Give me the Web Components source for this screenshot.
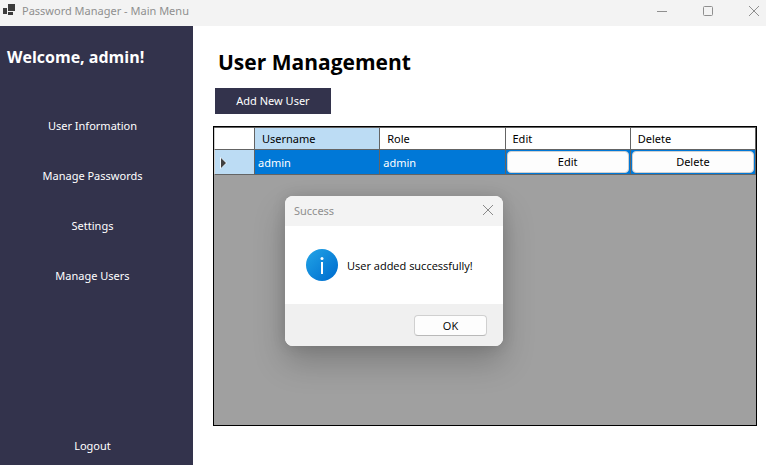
<!DOCTYPE html>
<html lang="en">
<head>
<meta charset="utf-8">
<title>Password Manager - Main Menu</title>
<style>
html, body { height: 100%; }
body { margin: 0; background: #fff; color: #000; font: 12px/16px "Open Sans", "Noto Sans", sans-serif; --compact: 11px/16px "Noto Sans", "Open Sans", sans-serif; }
</style>
</head>
<body>
<app-window>
  <title-bar slot="title">Password Manager - Main Menu</title-bar>
  <side-menu slot="side">
    <span slot="greeting">Welcome, admin!</span>
    <menu-item>User Information</menu-item>
    <menu-item>Manage Passwords</menu-item>
    <menu-item>Settings</menu-item>
    <menu-item>Manage Users</menu-item>
    <menu-item slot="end">Logout</menu-item>
  </side-menu>
  <user-page></user-page>
  <message-box slot="dialog" heading="Success">User added successfully!</message-box>
</app-window>
<script>
function define(name, html, setup) {
  const template = document.createElement('template');
  template.innerHTML = html;
  customElements.define(name, class extends HTMLElement {
    constructor() {
      super();
      this.attachShadow({ mode: 'open' }).append(template.content.cloneNode(true));
    }
    connectedCallback() { if (setup) setup(this, this.shadowRoot); }
  });
}

define('app-window', `
<style>
:host { display: flex; flex-direction: column; min-height: 100vh; position: relative; }
.body { flex: 1; display: flex; }
main { flex: 1; display: flex; min-width: 0; }
::slotted([slot=dialog]) { position: absolute; left: 285px; top: 196px; }
</style>
<slot name="title"></slot>
<div class="body"><slot name="side"></slot><main><slot></slot></main></div>
<slot name="dialog"></slot>`);

define('title-bar', `
<style>
:host { display: flex; align-items: center; height: 26px; box-sizing: border-box; padding: 0 0 5px 3px; background: #f3f3f3; color: #8f8f8f; }
.logo { margin-right: 7px; flex: none; }
.text { flex: 1; font: var(--compact); white-space: nowrap; }
.controls { display: flex; gap: 22px; }
button { width: 24px; height: 20px; padding: 0; border: 0; background: none; display: grid; place-items: center; color: #8f8f8f; }
svg { display: block; }
</style>
<svg class="logo" width="12" height="13" viewBox="0 0 12 13" fill="#3c3c3c"><path d="M5 0h7v7H5zM0 4h4v6H0zM5 8h5v3H5z"/></svg>
<span class="text"><slot></slot></span>
<div class="controls">
<button aria-label="Minimize"><svg width="10" height="10"><path d="M0 5.5h10" stroke="currentColor"/></svg></button>
<button aria-label="Maximize"><svg width="10" height="10"><rect x=".5" y=".5" width="9" height="9" rx="1" fill="none" stroke="currentColor"/></svg></button>
<button aria-label="Close"><svg width="10" height="10"><path d="M0 0l10 10M10 0L0 10" stroke="currentColor"/></svg></button>
</div>`);

define('side-menu', `
<style>
:host { display: block; flex: none; width: 193px; background: #33334c; color: #fff; }
nav { display: flex; flex-direction: column; height: 100%; }
h2 { margin: 0; padding: 19px 7px 32px; font-size: 16px; line-height: 24px; font-weight: 700; white-space: nowrap; }
.end { margin-top: auto; margin-bottom: -6px; }
</style>
<nav aria-label="Main">
<h2><slot name="greeting"></slot></h2>
<slot></slot>
<div class="end"><slot name="end"></slot></div>
</nav>`);

define('menu-item', `
<style>
:host { display: block; }
button { display: block; width: 100%; height: 50px; padding: 0 8px 0 0; border: 0; background: none; color: #fff; font: var(--compact); }
</style>
<button type="button"><slot></slot></button>`);

define('user-page', `
<style>
:host { flex: 1; display: flex; flex-direction: column; align-items: flex-start; min-width: 0; padding: 20px 9px 39px 20px; }
h1 { margin: 0 0 10px 5px; font-size: 21px; line-height: 32px; font-weight: 700; }
.add { margin: 0 0 12px 2px; width: 116px; height: 26px; padding: 0; border: 0; background: #33334c; color: #fff; font: var(--compact); }
data-grid { flex: 1; align-self: stretch; }
</style>
<h1>User Management</h1>
<button class="add" type="button">Add New User</button>
<data-grid></data-grid>`);

define('data-grid', `
<style>
:host { display: block; box-sizing: border-box; border: 1px solid #000; background: #a0a0a0; }
table { width: 100%; table-layout: fixed; border-collapse: separate; border-spacing: 0; border-top: 1px solid #646464; font: var(--compact); }
col.mark { width: 41px; }
th, td { box-sizing: border-box; padding: 0; text-align: left; font-weight: 400; border: solid #646464; border-width: 0 1px 1px 0; }
thead th, thead td { height: 22px; padding-left: 7px; background: #fff; }
thead .on, tbody th { background: #bcdcf4; }
tr > :first-child { border-left: 1px solid #d0d0d0; }
tbody th { padding: 2px 0 0 5px; }
tbody td { height: 25px; padding: 2px 0 0 3px; background: #0078d7; color: #fff; }
tbody td.act { padding: 0 1px; }
td button { display: block; width: 100%; height: 22px; padding: 0; border: 1px solid #d0d0d0; border-radius: 4px; background: #fdfdfd; color: #000; font: inherit; }
svg { display: block; }
</style>
<table>
<colgroup><col class="mark"><col><col><col><col></colgroup>
<thead><tr><td></td><th class="on" scope="col">Username</th><th scope="col">Role</th><th scope="col">Edit</th><th scope="col">Delete</th></tr></thead>
<tbody><tr><th scope="row" aria-label="Current row"><svg width="8" height="12"><path d="M0 0v12l7-6z" fill="#fff" fill-opacity=".8"/><path d="M1 1v10l5-5z" fill="#404040"/></svg></th><td>admin</td><td>admin</td><td class="act"><button type="button">Edit</button></td><td class="act"><button type="button">Delete</button></td></tr></tbody>
</table>`);

define('message-box', `
<style>
:host { display: block; width: 218px; border-radius: 8px; box-shadow: 0 16px 32px rgba(0,0,0,.22), 0 0 14px rgba(0,0,0,.12); }
section { border-radius: 8px; overflow: hidden; background: #fff; }
header { display: flex; justify-content: space-between; align-items: center; height: 30px; padding: 0 9px; background: #f3f3f3; color: #8f8f8f; font: var(--compact); }
header button { width: 12px; height: 12px; margin-bottom: 2px; padding: 0; border: 0; background: none; color: #8a8a8a; }
.body { display: flex; align-items: center; gap: 9px; min-height: 78px; padding: 0 21px; font-size: 11px; white-space: nowrap; }
.body span { padding-top: 2px; }
footer { display: flex; justify-content: flex-end; padding: 11px 16px 10px; background: #f0f0f0; }
footer button { width: 73px; height: 21px; padding: 0; border: 1px solid #d0d0d0; border-bottom-color: #b9b9b9; border-radius: 4px; background: #fdfdfd; color: #000; font: inherit; font-size: 11px; }
svg { display: block; flex: none; }
</style>
<section role="dialog" aria-labelledby="t">
<header><span id="t"></span><button type="button" aria-label="Close"><svg width="12" height="12"><path d="M1 1l10 10M11 1L1 11" stroke="currentColor"/></svg></button></header>
<div class="body">
<svg width="32" height="32"><defs><linearGradient id="g" x1="0" y1="0" x2="1" y2="1"><stop offset=".1" stop-color="#1f9fe4"/><stop offset=".9" stop-color="#0070d0"/></linearGradient></defs><circle cx="16" cy="16" r="16" fill="url(#g)"/><circle cx="16" cy="9.5" r="1.5" fill="#fff"/><path d="M16 13v12" stroke="#fff" stroke-width="2"/></svg>
<span><slot></slot></span></div>
<footer><button type="button">OK</button></footer>
</section>`, (host, root) => { root.getElementById('t').textContent = host.getAttribute('heading'); });
</script>
</body>
</html>
